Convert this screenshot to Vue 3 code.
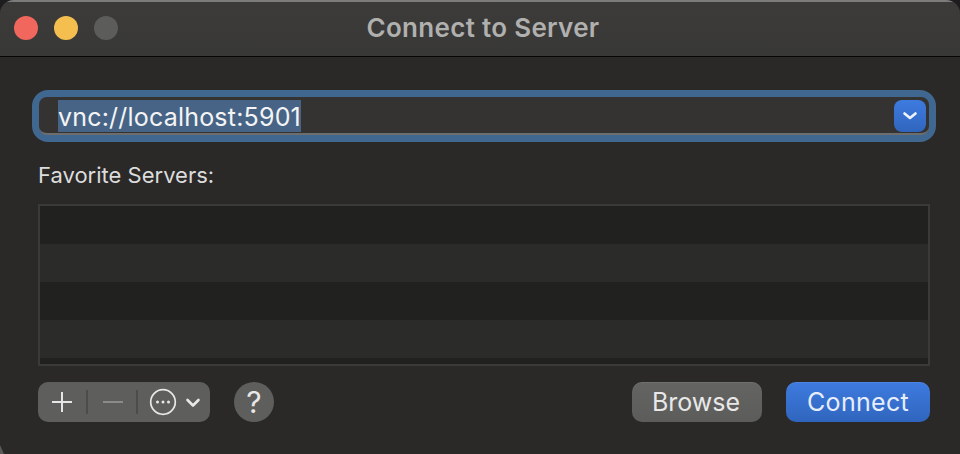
<script setup>
const rows = [0, 1, 2, 3, 4]
</script>

<template>
  <div class="window">
    <header class="titlebar">
      <div class="lights">
        <span class="light red"></span>
        <span class="light yellow"></span>
        <span class="light grey"></span>
      </div>
      <h1 class="title">Connect to Server</h1>
    </header>
    <main class="body">
      <div class="ring">
        <div class="field">
          <span class="selected">vnc://localhost:5901</span>
          <button class="drop" type="button">
            <svg width="16" height="12" viewBox="0 0 16 12"><path d="M2.500 3.500 8 8l5.500-4.500" fill="none" stroke="#eef3fc" stroke-width="2.600" stroke-linecap="round" stroke-linejoin="round"/></svg>
          </button>
        </div>
      </div>
      <div class="label">Favorite Servers:</div>
      <div class="list">
        <div v-for="r in rows" :key="r" class="row" :class="{ alt: r % 2 === 1, last: r === 4 }"></div>
      </div>
      <footer class="actions">
        <div class="segments">
          <span class="seg plus">
            <svg width="22" height="22" viewBox="0 0 22 22"><path d="M11 1v20M1 11h20" stroke="#e6e6e6" stroke-width="2" fill="none"/></svg>
          </span>
          <i class="sep"></i>
          <span class="seg minus">
            <svg width="22" height="4" viewBox="0 0 22 4"><path d="M1 2h20" stroke="#8b8b8a" stroke-width="2" fill="none"/></svg>
          </span>
          <i class="sep"></i>
          <span class="seg more">
            <svg width="28" height="28" viewBox="0 0 28 28"><circle cx="14" cy="14" r="12.300" fill="none" stroke="#e8e8e8" stroke-width="1.700"/><circle cx="8.500" cy="14" r="1.500" fill="#e8e8e8"/><circle cx="14" cy="14" r="1.500" fill="#e8e8e8"/><circle cx="19.500" cy="14" r="1.500" fill="#e8e8e8"/></svg>
            <svg class="more-arrow" width="16" height="12" viewBox="0 0 16 12"><path d="M2.500 3 8 8.500 13.500 3" fill="none" stroke="#e8e8e8" stroke-width="2.600" stroke-linecap="round" stroke-linejoin="round"/></svg>
          </span>
        </div>
        <button class="help" type="button">?</button>
        <span class="spacer"></span>
        <button class="btn browse" type="button">Browse</button>
        <button class="btn primary" type="button">Connect</button>
      </footer>
    </main>
  </div>
</template>

<style>
html, body { margin: 0; background: #1d1d1f; }
</style>

<style scoped>
.window {
  width: 960px;
  height: 454px;
  box-sizing: border-box;
  background: #2a2928;
  border-radius: 14px 14px 0 0;
  overflow: hidden;
  display: flex;
  flex-direction: column;
  position: relative;
  font-family: Inter, "Liberation Sans", sans-serif;
}
.window::after {
  content: "";
  position: absolute;
  left: 0;
  bottom: 0;
  width: 4px;
  height: 9px;
  background: #5a5a5a;
  clip-path: polygon(0 0, 100% 100%, 0 100%);
}
.titlebar {
  height: 57px;
  box-sizing: border-box;
  flex: none;
  position: relative;
  background: linear-gradient(#3c3b3a, #383837);
  border-top: 2px solid #7c7c7b;
  border-bottom: 1px solid #060606;
  display: flex;
  align-items: center;
  justify-content: center;
  padding-left: 6px;
}
.lights {
  position: absolute;
  left: 14px;
  top: 14px;
  display: flex;
  gap: 16px;
}
.light { width: 24px; height: 24px; border-radius: 50%; }
.red { background: #f1675d; }
.yellow { background: #f5bf4f; }
.grey { background: #5c5c5b; }
.title {
  margin: 0 0 4px;
  font-size: 26px;
  letter-spacing: 0.3px;
  font-weight: 600;
  color: #b0b0af;
}
.body {
  flex: 1;
  padding: 33px 30px 0 32px;
  display: flex;
  flex-direction: column;
}
.ring {
  width: 904px;
  height: 52px;
  box-sizing: border-box;
  border: 7px solid #3f678f;
  border-radius: 16px;
  background: #3f678f;
}
.field {
  height: 100%;
  box-sizing: border-box;
  background: #343332;
  border-radius: 8px;
  border-bottom: 2px solid #6d6d6d;
  display: flex;
  align-items: center;
  justify-content: space-between;
  padding: 3px 3px 1px 19px;
}
.selected {
  background: #476487;
  color: #f4f4f4;
  font-family: Inter, "Liberation Sans", sans-serif;
  font-size: 25px;
  letter-spacing: 0.2px;
  line-height: 34px;
  height: 32px;
  white-space: nowrap;
}
.drop {
  width: 32px;
  height: 32px;
  padding: 0;
  border: 0;
  border-radius: 8px;
  background: linear-gradient(#3e7be0, #2f65bd);
  display: flex;
  align-items: center;
  justify-content: center;
}
.label {
  margin: 20px 0 0 6px;
  height: 26px;
  line-height: 26px;
  font-size: 22px;
  color: #dcdcdc;
}
.list {
  margin: 16px 0 0 6px;
  width: 892px;
  height: 162px;
  box-sizing: border-box;
  border: 2px solid #3a3a39;
  display: flex;
  flex-direction: column;
  background: #212120;
}
.row { height: 38px; flex: none; background: #212120; }
.row.alt { background: #2b2b2a; }
.row.last { height: 6px; }
.actions {
  margin: 16px 0 0 6px;
  width: 892px;
  height: 40px;
  display: flex;
  align-items: center;
}
.segments {
  width: 172px;
  height: 40px;
  box-sizing: border-box;
  background: #5e5e5d;
  border-radius: 10px;
  display: flex;
  align-items: center;
}
.seg { display: flex; align-items: center; justify-content: center; }
.plus { width: 48px; }
.minus { width: 48px; box-sizing: border-box; padding-left: 2px; }
.more { padding-left: 11px; }
.more-arrow { margin-left: 8px; position: relative; top: 1px; }
.sep { width: 2px; height: 24px; background: #4c4c4b; flex: none; }
.help {
  margin-left: 24px;
  width: 40px;
  height: 40px;
  border: 0;
  padding: 0;
  border-radius: 50%;
  background: #5e5e5d;
  color: #e8e8e8;
  font-family: Inter, "Liberation Sans", sans-serif;
  font-size: 30px;
  font-weight: 400;
  line-height: 40px;
}
.spacer { flex: 1; }
.btn {
  width: 130px;
  height: 40px;
  border: 0;
  padding: 0;
  border-radius: 10px;
  background: linear-gradient(#646463, #5c5c5b);
  box-shadow: inset 0 1px rgba(255, 255, 255, 0.08);
  color: #e8e8e8;
  font-family: Inter, "Liberation Sans", sans-serif;
  font-size: 25px;
  line-height: 40px;
}
.browse { padding-right: 2px; }
.primary {
  width: 144px;
  margin-left: 24px;
  letter-spacing: 0.3px;
  background: linear-gradient(#3e7be0, #2f65bd);
  color: #e6eefb;
}
</style>
